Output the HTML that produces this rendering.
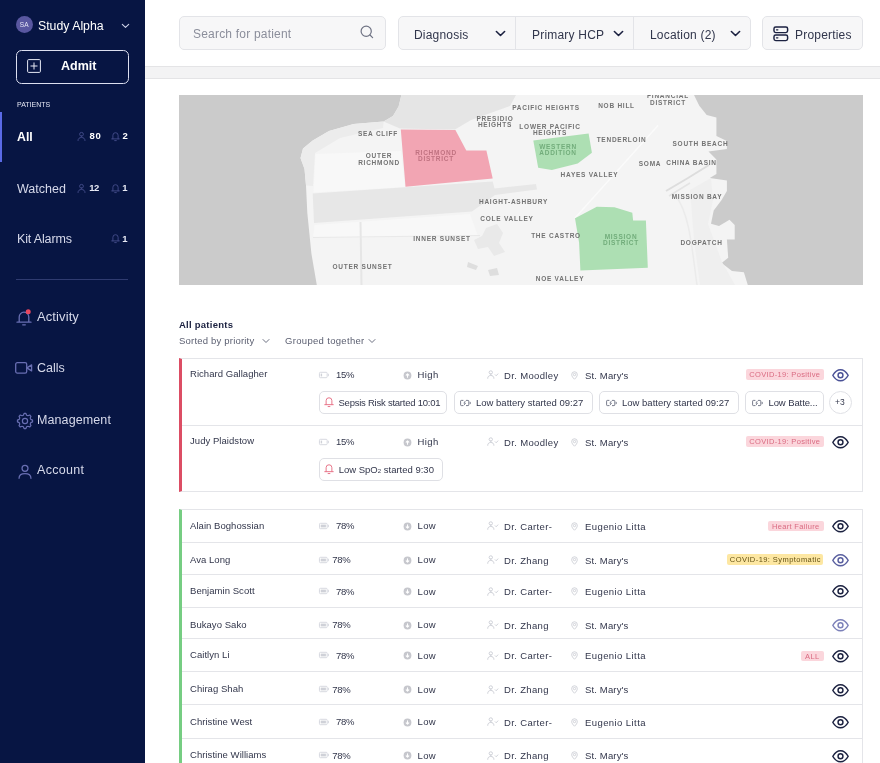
<!DOCTYPE html>
<html lang="en">
<head>
<meta charset="utf-8">
<title>Patients</title>
<style>
*{box-sizing:border-box;margin:0;padding:0}
html,body{width:880px;height:763px;overflow:hidden;background:#fff;font-family:"Liberation Sans",sans-serif;color:#1b2140}
.abs{position:absolute}
#side{position:absolute;left:0;top:0;width:145px;height:763px;background:#071543;color:#fff}
.t{position:absolute;white-space:nowrap;line-height:1}
svg{position:absolute;overflow:visible}
.box{position:absolute;background:#f7f7f8;border:1px solid #e3e4e8;border-radius:5px}
.r{font-size:9.5px;color:#32364b}
.chip{position:absolute;height:23px;border:1px solid #dfe0e5;border-radius:5px;background:#fff}
.tag{position:absolute;height:10.5px;border-radius:2px;font-size:7.5px;line-height:11.600px;text-align:center;white-space:nowrap;letter-spacing:.33px}
.ml{font-size:6.5px;font-weight:700;letter-spacing:.75px;fill:#737373;font-family:"Liberation Sans",sans-serif}
</style>
</head>
<body>
<div id="root" style="position:absolute;left:0;top:0;width:880px;height:763px;will-change:transform">
<div id="side">
<div class="abs" style="left:16px;top:16.400px;width:17px;height:17px;border-radius:50%;background:#5957a0"></div>
<div class="t" style="left:19.700px;top:21.700px;font-size:6.5px;color:#e6e6f5;letter-spacing:.2px">SA</div>
<div class="t" style="left:38px;top:19.600px;font-size:12.3px;color:#fff">Study Alpha</div>
<svg style="left:121px;top:23.400px" width="9" height="6" viewBox="0 0 9 6"><path d="M1.3 1.3 L4.5 4.3 L7.7 1.3" fill="none" stroke="#cfd3ea" stroke-width="1.1" stroke-linecap="round" stroke-linejoin="round"/></svg>
<div class="abs" style="left:16px;top:50px;width:113px;height:34px;border:1px solid #dcdff0;border-radius:5.5px"></div>
<svg style="left:27px;top:59px" width="14" height="14" viewBox="0 0 14 14"><rect x=".6" y=".6" width="12.8" height="12.8" rx="1" fill="none" stroke="#e8eaf5" stroke-width="1"/><path d="M7 3.500v7M3.5 7h7" stroke="#e8eaf5" stroke-width="1" fill="none"/></svg>
<div class="t" style="left:61px;top:60px;font-size:12.5px;font-weight:700;color:#fff">Admit</div>
<div class="t" style="left:17px;top:101px;font-size:7px;color:#e4e6f2">PATIENTS</div>
<div class="abs" style="left:0;top:112px;width:2px;height:50px;background:#5a6ae6"></div>
<div class="t" style="left:17px;top:130.5px;font-size:12.3px;font-weight:700;color:#fff">All</div>
<svg style="left:77px;top:131.5px" width="9" height="9" viewBox="0 0 9 9"><path d="M1 8.5c0-2 1.4-3 3.5-3s3.5 1 3.5 3M4.5 4.2a1.9 1.9 0 1 0 0-3.8 1.9 1.9 0 0 0 0 3.8z" fill="none" stroke="#454e8c" stroke-width=".9" stroke-linecap="round"/></svg>
<div class="t" style="left:89.600px;top:131.300px;font-size:9.5px;font-weight:700;letter-spacing:.5px;color:#fff">80</div>
<svg style="left:111px;top:131.5px" width="9" height="9" viewBox="0 0 9 9"><path d="M.7 6.900h7.600M1.9 6.900V3.300a2.6 2.6 0 0 1 5.2 0v3.600M3.7 8.600h1.6" fill="none" stroke="#454e8c" stroke-width=".9" stroke-linecap="round" stroke-linejoin="round"/></svg>
<div class="t" style="left:122.600px;top:131.300px;font-size:9.5px;font-weight:700;color:#fff">2</div>
<div class="t" style="left:17px;top:182.5px;font-size:12.5px;color:#d6d9ea">Watched</div>
<svg style="left:77px;top:183.5px" width="9" height="9" viewBox="0 0 9 9"><path d="M1 8.5c0-2 1.4-3 3.5-3s3.5 1 3.5 3M4.5 4.2a1.9 1.9 0 1 0 0-3.8 1.9 1.9 0 0 0 0 3.8z" fill="none" stroke="#454e8c" stroke-width=".9" stroke-linecap="round"/></svg>
<div class="t" style="left:89.300px;top:183.400px;font-size:9.5px;font-weight:700;letter-spacing:-.7px;color:#e8eaf5">12</div>
<svg style="left:111px;top:183.5px" width="9" height="9" viewBox="0 0 9 9"><path d="M.7 6.900h7.600M1.9 6.900V3.300a2.6 2.6 0 0 1 5.2 0v3.600M3.7 8.600h1.6" fill="none" stroke="#454e8c" stroke-width=".9" stroke-linecap="round" stroke-linejoin="round"/></svg>
<div class="t" style="left:122.300px;top:183.400px;font-size:9.5px;font-weight:700;color:#e8eaf5">1</div>
<div class="t" style="left:17px;top:233px;font-size:12.5px;letter-spacing:-.15px;color:#d6d9ea">Kit Alarms</div>
<svg style="left:111px;top:233.8px" width="9" height="9" viewBox="0 0 9 9"><path d="M.7 6.900h7.600M1.9 6.900V3.300a2.6 2.6 0 0 1 5.2 0v3.600M3.7 8.600h1.6" fill="none" stroke="#454e8c" stroke-width=".9" stroke-linecap="round" stroke-linejoin="round"/></svg>
<div class="t" style="left:122.300px;top:233.600px;font-size:9.5px;font-weight:700;color:#e8eaf5">1</div>
<div class="abs" style="left:16px;top:279px;width:112px;height:1px;background:#2f3b70"></div>
<svg style="left:16px;top:309px" width="17" height="17" viewBox="0 0 17 17"><path d="M1 13.2h14M3.2 13.200V8a4.8 4.8 0 0 1 9.6 0v5.200M6.7 15.800h2.6" fill="none" stroke="#686eb2" stroke-width="1.3" stroke-linecap="round" stroke-linejoin="round"/><circle cx="12.2" cy="2.7" r="2.5" fill="#e8475f"/></svg>
<div class="t" style="left:37px;top:310.300px;font-size:13px;letter-spacing:.1px;color:#d6d9ea">Activity</div>
<svg style="left:15px;top:361px" width="18" height="14" viewBox="0 0 18 14"><rect x=".7" y="1.7" width="11" height="10.4" rx="1.6" fill="none" stroke="#686eb2" stroke-width="1.3"/><path d="M11.9 6.900l4.7-3v6z" fill="none" stroke="#686eb2" stroke-width="1.3" stroke-linejoin="round"/></svg>
<div class="t" style="left:37px;top:362px;font-size:12.5px;color:#d6d9ea">Calls</div>
<svg style="left:15.5px;top:411.5px" width="18" height="18" viewBox="0 0 18 18"><path d="M16.55 8.09 L16.55 9.91 L14.78 10.62 L14.23 11.94 L14.98 13.69 L13.69 14.98 L11.94 14.23 L10.62 14.78 L9.91 16.55 L8.09 16.55 L7.38 14.78 L6.06 14.23 L4.31 14.98 L3.02 13.69 L3.77 11.94 L3.22 10.62 L1.45 9.91 L1.45 8.09 L3.22 7.38 L3.77 6.06 L3.02 4.31 L4.31 3.02 L6.06 3.77 L7.38 3.22 L8.09 1.45 L9.91 1.45 L10.62 3.22 L11.94 3.77 L13.69 3.02 L14.98 4.31 L14.23 6.06 L14.78 7.38Z" fill="none" stroke="#686eb2" stroke-width="1.2" stroke-linejoin="round"/><circle cx="9" cy="9" r="2.6" fill="none" stroke="#686eb2" stroke-width="1.2"/></svg>
<div class="t" style="left:37px;top:414px;font-size:12.5px;letter-spacing:.1px;color:#d6d9ea">Management</div>
<svg style="left:17.5px;top:463.5px" width="14" height="15.5" viewBox="0 0 16 17"><path d="M1.2 16c0-3.6 2.6-5.4 6.8-5.400s6.8 1.8 6.8 5.400M8 8a3.4 3.4 0 1 0 0-6.8 3.4 3.4 0 0 0 0 6.800z" fill="none" stroke="#686eb2" stroke-width="1.450" stroke-linecap="round"/></svg>
<div class="t" style="left:37px;top:464px;font-size:12.5px;letter-spacing:.3px;color:#d6d9ea">Account</div>
</div>
<div class="box" style="left:179px;top:16px;width:207px;height:34px"></div>
<div class="t" style="left:193px;top:27.5px;font-size:12px;letter-spacing:.2px;color:#8b8e9b">Search for patient</div>
<svg style="left:359.800px;top:25.300px" width="14" height="14" viewBox="0 0 14 14"><circle cx="6.2" cy="6.2" r="5.1" fill="none" stroke="#6f7384" stroke-width="1.2"/><path d="M10 10L12.6 12.6" stroke="#6f7384" stroke-width="1.2" stroke-linecap="round"/></svg>
<div class="box" style="left:398px;top:16px;width:353px;height:34px"></div>
<div class="abs" style="left:515px;top:16px;width:1px;height:34px;background:#e3e4e8"></div>
<div class="abs" style="left:633px;top:16px;width:1px;height:34px;background:#e3e4e8"></div>
<div class="t" style="left:414px;top:28.600px;font-size:12px;letter-spacing:.2px;color:#31364c">Diagnosis</div>
<svg style="left:494.5px;top:30px" width="11" height="7.5" viewBox="0 0 11 7.5"><path d="M1.4 1.5L5.5 5.5L9.6 1.5" fill="none" stroke="#1b2140" stroke-width="1.6" stroke-linecap="round" stroke-linejoin="round"/></svg>
<div class="t" style="left:532px;top:28.600px;font-size:12px;letter-spacing:.2px;color:#31364c">Primary HCP</div>
<svg style="left:612.5px;top:30px" width="11" height="7.5" viewBox="0 0 11 7.5"><path d="M1.4 1.5L5.5 5.5L9.6 1.5" fill="none" stroke="#1b2140" stroke-width="1.6" stroke-linecap="round" stroke-linejoin="round"/></svg>
<div class="t" style="left:650px;top:28.600px;font-size:12px;letter-spacing:.2px;color:#31364c">Location (2)</div>
<svg style="left:730.2px;top:30px" width="11" height="7.5" viewBox="0 0 11 7.5"><path d="M1.4 1.5L5.5 5.5L9.6 1.5" fill="none" stroke="#1b2140" stroke-width="1.6" stroke-linecap="round" stroke-linejoin="round"/></svg>
<div class="box" style="left:762px;top:16px;width:101px;height:34px"></div>
<svg style="left:772.700px;top:26px" width="15.6" height="15.6" viewBox="0 0 16 16"><rect x="1" y="1" width="14" height="5.8" rx="1.8" fill="none" stroke="#1b2140" stroke-width="1.5"/><rect x="1" y="9.2" width="14" height="5.8" rx="1.8" fill="none" stroke="#1b2140" stroke-width="1.5"/><path d="M3.6 3.900h1.4M3.6 12.1h1.4" stroke="#1b2140" stroke-width="1.3" stroke-linecap="round"/></svg>
<div class="t" style="left:795px;top:28.600px;font-size:12px;letter-spacing:.2px;color:#31364c">Properties</div>
<div class="abs" style="left:145px;top:66px;width:735px;height:13px;background:#f3f3f4;border-top:1px solid #e4e4e6;border-bottom:1px solid #e4e4e6"></div>
<svg style="left:179px;top:95px" width="684" height="190" viewBox="179 95 684 190">
<defs><clipPath id="mc"><rect x="179" y="95" width="684" height="190"/></clipPath></defs><g clip-path="url(#mc)">
<rect x="179" y="95" width="684" height="190" fill="#cbcbcb"/>
<path d="M401.4 95 L398.6 106.4 L393 116 L383.6 121.4 L353.6 124 L329 131 L312.7 140.5 L303 148.6 L300.5 158 L304.5 169 L306 185.5 L307.3 212.7 L311.4 253.6 L316.8 285 L747.8 285 L743.9 272.2 L732 271 L721.6 263 L728.2 257.8 L726.9 239.5 L734.7 239.5 L734.7 225 L729.5 219.8 L719 226 L711 223.7 L713.7 210.6 L721.6 200 L726.9 191 L726.9 180.5 L709.8 178 L716.4 174 L716.4 159.5 L708.5 151.6 L726.9 149 L726.9 141 L716.4 136 L716.4 117.5 L706.7 115 L699.3 105.7 L694 95 Z" fill="#f4f4f4"/>
<path d="M353.6 124 L329 131 L312.7 140.5 L303 148.6 L300.5 158 L304.5 169 L306 185.5 L313 186 L315 153 L340 138 L383 128 L383.6 121.4 Z" fill="#ececec"/>
<path d="M401.4 95 L398.6 106.4 L393 116 L383.6 121.4 L400 128.5 L455 129.5 L471 120 L510 106 L516 95 Z" fill="#e5e5e5"/>
<path d="M315.5 154 L401 151 L405 187 L313.5 192.5 Z" fill="#f8f8f8"/>
<path d="M312.7 193.5 L405.5 187.3 L492.7 181.4 L494.5 188.5 L536 184 L537 189.5 L495 195 L472 211.5 L314 223 Z" fill="#e7e7e7"/>
<path d="M314.5 225 L470 214 L478 236 L313 238 Z" fill="#f8f8f8"/>
<path d="M359.5 222 L361.5 222 L362.5 285 L360.5 285 Z" fill="#e6e6e6"/>
<path d="M313 237.5 L480 235.5" stroke="#e9e9e9" stroke-width="1" fill="none"/>
<path d="M486 228 L497 224 L503 233 L499 243 L505 252 L494 256 L488 247 L478 249 L474 240 L482 236 Z" fill="#e9e9e9"/>
<path d="M468 262 L478 266 L476 270 L467 267 Z" fill="#dedede"/>
<path d="M488 270 L497 268 L499 275 L490 276 Z" fill="#dedede"/>
<path d="M690 190 L711 178 L713 200 L708 224 L722 262 L735 285 L700 285 L694 240 Z" fill="#efefef"/>
<path d="M575 218 L658 125.5" stroke="#fbfbfb" stroke-width="1.5" fill="none"/>
<path d="M666 191 L688 178 L709 165" stroke="#dddddd" stroke-width="2" fill="none"/>
<path d="M669 196 L690 183" stroke="#e4e4e4" stroke-width="1.5" fill="none"/>
<path d="M676 196 C690 215 692 250 697 285" stroke="#ebebeb" stroke-width="1.5" fill="none"/>
<path d="M400.8 129.5 L455.4 130 L466.3 150.5 L486.4 150.5 L492.7 178.6 L405.5 186.8 Z" fill="#f2a5b3"/>
<path d="M533.3 140.5 L588.6 133.6 L591.9 152.7 L577.7 163.6 L551.8 169.9 L538.2 167.7 Z" fill="#addfb3"/>
<path d="M575 218.2 L596.8 206.7 L614.5 207.3 L632.3 212.7 L633.1 220.4 L645.9 220.4 L647.8 267.8 L580.4 270.5 L579.1 242.7 Z" fill="#addfb3"/>
<text class="ml" x="378" y="136" text-anchor="middle">SEA CLIFF</text>
<text class="ml" x="379" y="158" text-anchor="middle">OUTER</text>
<text class="ml" x="379" y="164.5" text-anchor="middle">RICHMOND</text>
<text class="ml" x="436" y="154.5" text-anchor="middle" style="fill:#c07281">RICHMOND</text>
<text class="ml" x="436" y="161" text-anchor="middle" style="fill:#c07281">DISTRICT</text>
<text class="ml" x="495" y="120.5" text-anchor="middle">PRESIDIO</text>
<text class="ml" x="495" y="127" text-anchor="middle">HEIGHTS</text>
<text class="ml" x="546" y="109.5" text-anchor="middle">PACIFIC HEIGHTS</text>
<text class="ml" x="550" y="128.5" text-anchor="middle">LOWER PACIFIC</text>
<text class="ml" x="550" y="135" text-anchor="middle">HEIGHTS</text>
<text class="ml" x="616.5" y="107.5" text-anchor="middle">NOB HILL</text>
<text class="ml" x="668" y="98" text-anchor="middle">FINANCIAL</text>
<text class="ml" x="668" y="104.5" text-anchor="middle">DISTRICT</text>
<text class="ml" x="558" y="148.5" text-anchor="middle" style="fill:#72ad7b">WESTERN</text>
<text class="ml" x="558" y="155" text-anchor="middle" style="fill:#72ad7b">ADDITION</text>
<text class="ml" x="621.5" y="141.5" text-anchor="middle">TENDERLOIN</text>
<text class="ml" x="700.5" y="146" text-anchor="middle">SOUTH BEACH</text>
<text class="ml" x="650" y="165.5" text-anchor="middle">SOMA</text>
<text class="ml" x="691.5" y="164.5" text-anchor="middle">CHINA BASIN</text>
<text class="ml" x="589.5" y="177" text-anchor="middle">HAYES VALLEY</text>
<text class="ml" x="697" y="198.5" text-anchor="middle">MISSION BAY</text>
<text class="ml" x="513.5" y="203.5" text-anchor="middle">HAIGHT-ASHBURY</text>
<text class="ml" x="507" y="221" text-anchor="middle">COLE VALLEY</text>
<text class="ml" x="442" y="241" text-anchor="middle">INNER SUNSET</text>
<text class="ml" x="556" y="238" text-anchor="middle">THE CASTRO</text>
<text class="ml" x="621" y="238.5" text-anchor="middle" style="fill:#72ad7b">MISSION</text>
<text class="ml" x="621" y="245" text-anchor="middle" style="fill:#72ad7b">DISTRICT</text>
<text class="ml" x="701.5" y="245" text-anchor="middle">DOGPATCH</text>
<text class="ml" x="362.5" y="268.5" text-anchor="middle">OUTER SUNSET</text>
<text class="ml" x="560" y="281" text-anchor="middle">NOE VALLEY</text>
</g></svg>
<div class="t" style="left:179px;top:320px;font-size:9.5px;letter-spacing:.25px;font-weight:700;color:#1b2140">All patients</div>
<div class="t" style="left:179px;top:336px;font-size:9.5px;letter-spacing:.2px;color:#5a5e70">Sorted by priority</div>
<svg style="left:261.5px;top:338px" width="8" height="6" viewBox="0 0 8 6"><path d="M1 1.500L4 4.500L7 1.5" fill="none" stroke="#6b6f80" stroke-width="1" stroke-linecap="round" stroke-linejoin="round"/></svg>
<div class="t" style="left:285px;top:336px;font-size:9.5px;letter-spacing:.32px;color:#5a5e70">Grouped together</div>
<svg style="left:368px;top:338px" width="8" height="6" viewBox="0 0 8 6"><path d="M1 1.500L4 4.500L7 1.5" fill="none" stroke="#6b6f80" stroke-width="1" stroke-linecap="round" stroke-linejoin="round"/></svg>
<div class="abs" style="left:179px;top:358px;width:684px;height:134px;border:1px solid #e4e5e9;border-left:3px solid #dc4d64;background:#fff"></div>
<div class="abs" style="left:182px;top:425px;width:680px;height:1px;background:#e4e5e9"></div>
<div class="t r" style="left:190px;top:368.9px;letter-spacing:.05px">Richard Gallagher</div>
<svg style="left:319px;top:370.9px" width="11" height="8" viewBox="0 0 11 8"><rect x=".45" y="1.3" width="7.7" height="5.4" rx="1" fill="none" stroke="#d3d5dc" stroke-width=".9"/><path d="M9.4 3.200v1.6" stroke="#d3d5dc" stroke-width=".9" stroke-linecap="round"/><rect x="1.7" y="2.6" width="1.4" height="2.8" fill="#cfd1d8"/></svg>
<div class="t r" style="left:335.9px;top:370.4px;letter-spacing:-.25px">15%</div>
<svg style="left:402.8px;top:370.7px" width="9" height="9" viewBox="0 0 9 9"><circle cx="4.5" cy="4.5" r="3.9" fill="#c6c7cd"/><path d="M4.5 6.200V3M3.2 4.200L4.5 2.900L5.8 4.2" stroke="#fff" stroke-width="1.1" fill="none" stroke-linecap="round" stroke-linejoin="round"/></svg>
<div class="t r" style="left:417.5px;top:370.4px;letter-spacing:.4px">High</div>
<svg style="left:486.5px;top:370.3px" width="11.5" height="9" viewBox="0 0 13 10"><path d="M.800 9.300c0-2.1 1.4-3.2 3.5-3.200s3.5 1.1 3.5 3.200M4.3 4.600a1.9 1.9 0 1 0 0-3.8 1.9 1.9 0 0 0 0 3.800zM9.3 5.300l1.1 1.1 1.9-2.1" fill="none" stroke="#c9cbd3" stroke-width="1" stroke-linecap="round" stroke-linejoin="round"/></svg>
<div class="t r" style="left:504px;top:370.7px;letter-spacing:.35px">Dr. Moodley</div>
<svg style="left:570.5px;top:370.5px" width="7" height="9" viewBox="0 0 9 11"><path d="M4.5 10.300C2.3 8.2.9 6.3.9 4.300a3.6 3.6 0 0 1 7.2 0c0 2-1.4 3.9-3.6 6z" fill="none" stroke="#c9cbd3" stroke-width="1.1"/><circle cx="4.5" cy="4.3" r="1.5" fill="none" stroke="#c9cbd3" stroke-width="1.1"/></svg>
<div class="t r" style="left:585px;top:370.7px;letter-spacing:0.15px">St. Mary&#39;s</div>
<div class="tag" style="left:745.5px;top:369px;width:78.5px;background:#fbd6dc;color:#da6b82">COVID-19: Positive</div>
<svg style="left:832.3px;top:368.6px" width="17" height="12.6" viewBox="0 0 17 12.6"><path d="M.8 6.300C2.9 2.8 5.4 .8 8.5 .8s5.6 2 7.7 5.500c-2.1 3.5-4.6 5.5-7.7 5.500S2.9 9.8 .8 6.300z" fill="none" stroke="#4a5196" stroke-width="1.350" stroke-linejoin="round"/><circle cx="8.5" cy="6.3" r="2.450" fill="none" stroke="#4a5196" stroke-width="1.450"/></svg>
<div class="t r" style="left:190px;top:436.1px;letter-spacing:.05px">Judy Plaidstow</div>
<svg style="left:319px;top:437.9px" width="11" height="8" viewBox="0 0 11 8"><rect x=".45" y="1.3" width="7.7" height="5.4" rx="1" fill="none" stroke="#d3d5dc" stroke-width=".9"/><path d="M9.4 3.200v1.6" stroke="#d3d5dc" stroke-width=".9" stroke-linecap="round"/><rect x="1.7" y="2.6" width="1.4" height="2.8" fill="#cfd1d8"/></svg>
<div class="t r" style="left:335.9px;top:437.4px;letter-spacing:-.25px">15%</div>
<svg style="left:402.8px;top:437.7px" width="9" height="9" viewBox="0 0 9 9"><circle cx="4.5" cy="4.5" r="3.9" fill="#c6c7cd"/><path d="M4.5 6.200V3M3.2 4.200L4.5 2.900L5.8 4.2" stroke="#fff" stroke-width="1.1" fill="none" stroke-linecap="round" stroke-linejoin="round"/></svg>
<div class="t r" style="left:417.5px;top:437.4px;letter-spacing:.4px">High</div>
<svg style="left:486.5px;top:437.3px" width="11.5" height="9" viewBox="0 0 13 10"><path d="M.800 9.300c0-2.1 1.4-3.2 3.5-3.200s3.5 1.1 3.5 3.200M4.3 4.600a1.9 1.9 0 1 0 0-3.8 1.9 1.9 0 0 0 0 3.800zM9.3 5.300l1.1 1.1 1.9-2.1" fill="none" stroke="#c9cbd3" stroke-width="1" stroke-linecap="round" stroke-linejoin="round"/></svg>
<div class="t r" style="left:504px;top:437.7px;letter-spacing:.35px">Dr. Moodley</div>
<svg style="left:570.5px;top:437.5px" width="7" height="9" viewBox="0 0 9 11"><path d="M4.5 10.300C2.3 8.2.9 6.3.9 4.300a3.6 3.6 0 0 1 7.2 0c0 2-1.4 3.9-3.6 6z" fill="none" stroke="#c9cbd3" stroke-width="1.1"/><circle cx="4.5" cy="4.3" r="1.5" fill="none" stroke="#c9cbd3" stroke-width="1.1"/></svg>
<div class="t r" style="left:585px;top:437.7px;letter-spacing:0.15px">St. Mary&#39;s</div>
<div class="tag" style="left:745.5px;top:436px;width:78.5px;background:#fbd6dc;color:#da6b82">COVID-19: Positive</div>
<svg style="left:832.3px;top:436.2px" width="17" height="12.6" viewBox="0 0 17 12.6"><path d="M.8 6.300C2.9 2.8 5.4 .8 8.5 .8s5.6 2 7.7 5.500c-2.1 3.5-4.6 5.5-7.7 5.500S2.9 9.8 .8 6.300z" fill="none" stroke="#1b2140" stroke-width="1.350" stroke-linejoin="round"/><circle cx="8.5" cy="6.3" r="2.450" fill="none" stroke="#1b2140" stroke-width="1.450"/></svg>
<div class="chip" style="left:319px;top:391px;width:128px"></div>
<svg style="left:324.3px;top:397.1px" width="10" height="10" viewBox="0 0 9 9"><path d="M.7 6.900h7.600M1.9 6.900V3.300a2.6 2.6 0 0 1 5.2 0v3.600M3.7 8.600h1.6" fill="none" stroke="#e8768a" stroke-width=".9" stroke-linecap="round" stroke-linejoin="round"/></svg>
<div class="t r" style="left:338.5px;top:397.5px;letter-spacing:-.24px">Sepsis Risk started 10:01</div>
<div class="chip" style="left:454px;top:391px;width:139px"></div>
<svg style="left:460px;top:398.5px" width="11" height="8" viewBox="0 0 11 8"><path d="M3 1.400H1.300a.7.7 0 0 0-.7.700v3.800a.7.7 0 0 0 .7.700H3M6.4 1.400h1.700a.7.7 0 0 1 .7.700v3.800a.7.7 0 0 1-.7.700H6.400M10.2 3.300v1.4" fill="none" stroke="#6a6e80" stroke-width=".9" stroke-linecap="round"/><path d="M5.2 2.200L3.9 4.200h1.600L4.2 5.9" fill="none" stroke="#6a6e80" stroke-width=".8" stroke-linejoin="round" stroke-linecap="round"/></svg>
<div class="t r" style="left:476px;top:397.5px;">Low battery started 09:27</div>
<div class="chip" style="left:599px;top:391px;width:140px"></div>
<svg style="left:606px;top:398.5px" width="11" height="8" viewBox="0 0 11 8"><path d="M3 1.400H1.300a.7.7 0 0 0-.7.700v3.800a.7.7 0 0 0 .7.700H3M6.4 1.400h1.700a.7.7 0 0 1 .7.700v3.800a.7.7 0 0 1-.7.700H6.400M10.2 3.300v1.4" fill="none" stroke="#6a6e80" stroke-width=".9" stroke-linecap="round"/><path d="M5.2 2.200L3.9 4.200h1.600L4.2 5.9" fill="none" stroke="#6a6e80" stroke-width=".8" stroke-linejoin="round" stroke-linecap="round"/></svg>
<div class="t r" style="left:622px;top:397.5px;">Low battery started 09:27</div>
<div class="chip" style="left:745px;top:391px;width:79px"></div>
<svg style="left:752px;top:398.5px" width="11" height="8" viewBox="0 0 11 8"><path d="M3 1.400H1.300a.7.7 0 0 0-.7.700v3.800a.7.7 0 0 0 .7.700H3M6.4 1.400h1.700a.7.7 0 0 1 .7.700v3.800a.7.7 0 0 1-.7.700H6.400M10.2 3.300v1.4" fill="none" stroke="#6a6e80" stroke-width=".9" stroke-linecap="round"/><path d="M5.2 2.200L3.9 4.200h1.600L4.2 5.9" fill="none" stroke="#6a6e80" stroke-width=".8" stroke-linejoin="round" stroke-linecap="round"/></svg>
<div class="t r" style="left:768.5px;top:397.5px;letter-spacing:-.1px">Low Batte...</div>
<div class="abs" style="left:829px;top:391px;width:23px;height:23px;border:1px solid #dfe0e5;border-radius:50%"></div>
<div class="t r" style="left:835px;top:397.5px;font-size:8.500px">+3</div>
<div class="chip" style="left:319px;top:458px;width:124px"></div>
<svg style="left:324.3px;top:464.1px" width="10" height="10" viewBox="0 0 9 9"><path d="M.7 6.900h7.600M1.9 6.900V3.300a2.6 2.6 0 0 1 5.2 0v3.600M3.7 8.600h1.6" fill="none" stroke="#e8768a" stroke-width=".9" stroke-linecap="round" stroke-linejoin="round"/></svg>
<div class="t r" style="left:338.7px;top:464.7px;">Low SpO<span style="font-size:6px">2</span> started 9:30</div>
<div class="abs" style="left:179px;top:509px;width:684px;height:261px;border:1px solid #e4e5e9;border-left:3px solid #76cd82;background:#fff"></div>
<div class="abs" style="left:182px;top:542px;width:680px;height:1px;background:#e4e5e9"></div>
<div class="abs" style="left:182px;top:574px;width:680px;height:1px;background:#e4e5e9"></div>
<div class="abs" style="left:182px;top:607px;width:680px;height:1px;background:#e4e5e9"></div>
<div class="abs" style="left:182px;top:638px;width:680px;height:1px;background:#e4e5e9"></div>
<div class="abs" style="left:182px;top:671px;width:680px;height:1px;background:#e4e5e9"></div>
<div class="abs" style="left:182px;top:704px;width:680px;height:1px;background:#e4e5e9"></div>
<div class="abs" style="left:182px;top:737.5px;width:680px;height:1px;background:#e4e5e9"></div>
<div class="t r" style="left:190px;top:520.5px;letter-spacing:.05px">Alain Boghossian</div>
<svg style="left:319px;top:521.9px" width="11" height="8" viewBox="0 0 11 8"><rect x=".45" y="1.3" width="7.7" height="5.4" rx="1" fill="none" stroke="#d3d5dc" stroke-width=".9"/><path d="M9.4 3.200v1.6" stroke="#d3d5dc" stroke-width=".9" stroke-linecap="round"/><rect x="1.7" y="2.6" width="5.2" height="2.8" fill="#cfd1d8"/></svg>
<div class="t r" style="left:335.9px;top:521.4px;letter-spacing:-.25px">78%</div>
<svg style="left:402.8px;top:521.7px" width="9" height="9" viewBox="0 0 9 9"><circle cx="4.5" cy="4.5" r="3.9" fill="#c6c7cd"/><path d="M4.5 2.800V6M3.2 4.800L4.5 6.100L5.8 4.8" stroke="#fff" stroke-width="1.1" fill="none" stroke-linecap="round" stroke-linejoin="round"/></svg>
<div class="t r" style="left:417.5px;top:521.4px;letter-spacing:.4px">Low</div>
<svg style="left:486.5px;top:521.3px" width="11.5" height="9" viewBox="0 0 13 10"><path d="M.800 9.300c0-2.1 1.4-3.2 3.5-3.200s3.5 1.1 3.5 3.200M4.3 4.600a1.9 1.9 0 1 0 0-3.8 1.9 1.9 0 0 0 0 3.800zM9.3 5.300l1.1 1.1 1.9-2.1" fill="none" stroke="#c9cbd3" stroke-width="1" stroke-linecap="round" stroke-linejoin="round"/></svg>
<div class="t r" style="left:504px;top:521.7px;letter-spacing:.35px">Dr. Carter-</div>
<svg style="left:570.5px;top:521.5px" width="7" height="9" viewBox="0 0 9 11"><path d="M4.5 10.300C2.3 8.2.9 6.3.9 4.300a3.6 3.6 0 0 1 7.2 0c0 2-1.4 3.9-3.6 6z" fill="none" stroke="#c9cbd3" stroke-width="1.1"/><circle cx="4.5" cy="4.3" r="1.5" fill="none" stroke="#c9cbd3" stroke-width="1.1"/></svg>
<div class="t r" style="left:585px;top:521.7px;letter-spacing:0.42px">Eugenio Litta</div>
<div class="tag" style="left:768px;top:520.5px;width:55.5px;background:#fbd6dc;color:#da6b82">Heart Failure</div>
<svg style="left:832.3px;top:520.2px" width="17" height="12.6" viewBox="0 0 17 12.6"><path d="M.8 6.300C2.9 2.8 5.4 .8 8.5 .8s5.6 2 7.7 5.500c-2.1 3.5-4.6 5.5-7.7 5.500S2.9 9.8 .8 6.300z" fill="none" stroke="#1b2140" stroke-width="1.350" stroke-linejoin="round"/><circle cx="8.5" cy="6.3" r="2.450" fill="none" stroke="#1b2140" stroke-width="1.450"/></svg>
<div class="t r" style="left:190px;top:554.5px;letter-spacing:.05px">Ava Long</div>
<svg style="left:319px;top:555.9px" width="11" height="8" viewBox="0 0 11 8"><rect x=".45" y="1.3" width="7.7" height="5.4" rx="1" fill="none" stroke="#d3d5dc" stroke-width=".9"/><path d="M9.4 3.200v1.6" stroke="#d3d5dc" stroke-width=".9" stroke-linecap="round"/><rect x="1.7" y="2.6" width="5.2" height="2.8" fill="#cfd1d8"/></svg>
<div class="t r" style="left:332.3px;top:555.4px;letter-spacing:-.25px">78%</div>
<svg style="left:402.8px;top:555.7px" width="9" height="9" viewBox="0 0 9 9"><circle cx="4.5" cy="4.5" r="3.9" fill="#c6c7cd"/><path d="M4.5 2.800V6M3.2 4.800L4.5 6.100L5.8 4.8" stroke="#fff" stroke-width="1.1" fill="none" stroke-linecap="round" stroke-linejoin="round"/></svg>
<div class="t r" style="left:417.5px;top:555.4px;letter-spacing:.4px">Low</div>
<svg style="left:486.5px;top:555.3px" width="11.5" height="9" viewBox="0 0 13 10"><path d="M.800 9.300c0-2.1 1.4-3.2 3.5-3.200s3.5 1.1 3.5 3.200M4.3 4.600a1.9 1.9 0 1 0 0-3.8 1.9 1.9 0 0 0 0 3.800zM9.3 5.300l1.1 1.1 1.9-2.1" fill="none" stroke="#c9cbd3" stroke-width="1" stroke-linecap="round" stroke-linejoin="round"/></svg>
<div class="t r" style="left:504px;top:555.7px;letter-spacing:.35px">Dr. Zhang</div>
<svg style="left:570.5px;top:555.5px" width="7" height="9" viewBox="0 0 9 11"><path d="M4.5 10.300C2.3 8.2.9 6.3.9 4.300a3.6 3.6 0 0 1 7.2 0c0 2-1.4 3.9-3.6 6z" fill="none" stroke="#c9cbd3" stroke-width="1.1"/><circle cx="4.5" cy="4.3" r="1.5" fill="none" stroke="#c9cbd3" stroke-width="1.1"/></svg>
<div class="t r" style="left:585px;top:555.7px;letter-spacing:0.15px">St. Mary&#39;s</div>
<div class="tag" style="left:727.3px;top:554.2px;width:96.2px;background:#fde7a2;color:#655316;height:11px;line-height:12.200px;letter-spacing:.43px">COVID-19: Symptomatic</div>
<svg style="left:832.3px;top:553.6px" width="17" height="12.6" viewBox="0 0 17 12.6"><path d="M.8 6.300C2.9 2.8 5.4 .8 8.5 .8s5.6 2 7.7 5.500c-2.1 3.5-4.6 5.5-7.7 5.500S2.9 9.8 .8 6.300z" fill="none" stroke="#595f9f" stroke-width="1.350" stroke-linejoin="round"/><circle cx="8.5" cy="6.3" r="2.450" fill="none" stroke="#595f9f" stroke-width="1.450"/></svg>
<div class="t r" style="left:190px;top:586px;letter-spacing:.05px">Benjamin Scott</div>
<svg style="left:319px;top:587.4px" width="11" height="8" viewBox="0 0 11 8"><rect x=".45" y="1.3" width="7.7" height="5.4" rx="1" fill="none" stroke="#d3d5dc" stroke-width=".9"/><path d="M9.4 3.200v1.6" stroke="#d3d5dc" stroke-width=".9" stroke-linecap="round"/><rect x="1.7" y="2.6" width="5.2" height="2.8" fill="#cfd1d8"/></svg>
<div class="t r" style="left:335.9px;top:586.9px;letter-spacing:-.25px">78%</div>
<svg style="left:402.8px;top:587.2px" width="9" height="9" viewBox="0 0 9 9"><circle cx="4.5" cy="4.5" r="3.9" fill="#c6c7cd"/><path d="M4.5 2.800V6M3.2 4.800L4.5 6.100L5.8 4.8" stroke="#fff" stroke-width="1.1" fill="none" stroke-linecap="round" stroke-linejoin="round"/></svg>
<div class="t r" style="left:417.5px;top:586.9px;letter-spacing:.4px">Low</div>
<svg style="left:486.5px;top:586.8px" width="11.5" height="9" viewBox="0 0 13 10"><path d="M.800 9.300c0-2.1 1.4-3.2 3.5-3.200s3.5 1.1 3.5 3.200M4.3 4.600a1.9 1.9 0 1 0 0-3.8 1.9 1.9 0 0 0 0 3.800zM9.3 5.300l1.1 1.1 1.9-2.1" fill="none" stroke="#c9cbd3" stroke-width="1" stroke-linecap="round" stroke-linejoin="round"/></svg>
<div class="t r" style="left:504px;top:587.2px;letter-spacing:.35px">Dr. Carter-</div>
<svg style="left:570.5px;top:587px" width="7" height="9" viewBox="0 0 9 11"><path d="M4.5 10.300C2.3 8.2.9 6.3.9 4.300a3.6 3.6 0 0 1 7.2 0c0 2-1.4 3.9-3.6 6z" fill="none" stroke="#c9cbd3" stroke-width="1.1"/><circle cx="4.5" cy="4.3" r="1.5" fill="none" stroke="#c9cbd3" stroke-width="1.1"/></svg>
<div class="t r" style="left:585px;top:587.2px;letter-spacing:0.42px">Eugenio Litta</div>
<svg style="left:832.3px;top:584.6px" width="17" height="12.6" viewBox="0 0 17 12.6"><path d="M.8 6.300C2.9 2.8 5.4 .8 8.5 .8s5.6 2 7.7 5.500c-2.1 3.5-4.6 5.5-7.7 5.500S2.9 9.8 .8 6.300z" fill="none" stroke="#1b2140" stroke-width="1.350" stroke-linejoin="round"/><circle cx="8.5" cy="6.3" r="2.450" fill="none" stroke="#1b2140" stroke-width="1.450"/></svg>
<div class="t r" style="left:190px;top:619.5px;letter-spacing:.05px">Bukayo Sako</div>
<svg style="left:319px;top:620.9px" width="11" height="8" viewBox="0 0 11 8"><rect x=".45" y="1.3" width="7.7" height="5.4" rx="1" fill="none" stroke="#d3d5dc" stroke-width=".9"/><path d="M9.4 3.200v1.6" stroke="#d3d5dc" stroke-width=".9" stroke-linecap="round"/><rect x="1.7" y="2.6" width="5.2" height="2.8" fill="#cfd1d8"/></svg>
<div class="t r" style="left:332.3px;top:620.4px;letter-spacing:-.25px">78%</div>
<svg style="left:402.8px;top:620.7px" width="9" height="9" viewBox="0 0 9 9"><circle cx="4.5" cy="4.5" r="3.9" fill="#c6c7cd"/><path d="M4.5 2.800V6M3.2 4.800L4.5 6.100L5.8 4.8" stroke="#fff" stroke-width="1.1" fill="none" stroke-linecap="round" stroke-linejoin="round"/></svg>
<div class="t r" style="left:417.5px;top:620.4px;letter-spacing:.4px">Low</div>
<svg style="left:486.5px;top:620.3px" width="11.5" height="9" viewBox="0 0 13 10"><path d="M.800 9.300c0-2.1 1.4-3.2 3.5-3.200s3.5 1.1 3.5 3.200M4.3 4.600a1.9 1.9 0 1 0 0-3.8 1.9 1.9 0 0 0 0 3.800zM9.3 5.300l1.1 1.1 1.9-2.1" fill="none" stroke="#c9cbd3" stroke-width="1" stroke-linecap="round" stroke-linejoin="round"/></svg>
<div class="t r" style="left:504px;top:620.7px;letter-spacing:.35px">Dr. Zhang</div>
<svg style="left:570.5px;top:620.5px" width="7" height="9" viewBox="0 0 9 11"><path d="M4.5 10.300C2.3 8.2.9 6.3.9 4.300a3.6 3.6 0 0 1 7.2 0c0 2-1.4 3.9-3.6 6z" fill="none" stroke="#c9cbd3" stroke-width="1.1"/><circle cx="4.5" cy="4.3" r="1.5" fill="none" stroke="#c9cbd3" stroke-width="1.1"/></svg>
<div class="t r" style="left:585px;top:620.7px;letter-spacing:0.15px">St. Mary&#39;s</div>
<svg style="left:832.3px;top:618.5px" width="17" height="12.6" viewBox="0 0 17 12.6"><path d="M.8 6.300C2.9 2.8 5.4 .8 8.5 .8s5.6 2 7.7 5.500c-2.1 3.5-4.6 5.5-7.7 5.500S2.9 9.8 .8 6.300z" fill="none" stroke="#7c81b9" stroke-width="1.350" stroke-linejoin="round"/><circle cx="8.5" cy="6.3" r="2.450" fill="none" stroke="#7c81b9" stroke-width="1.450"/></svg>
<div class="t r" style="left:190px;top:650px;letter-spacing:.05px">Caitlyn Li</div>
<svg style="left:319px;top:651.4px" width="11" height="8" viewBox="0 0 11 8"><rect x=".45" y="1.3" width="7.7" height="5.4" rx="1" fill="none" stroke="#d3d5dc" stroke-width=".9"/><path d="M9.4 3.200v1.6" stroke="#d3d5dc" stroke-width=".9" stroke-linecap="round"/><rect x="1.7" y="2.6" width="5.2" height="2.8" fill="#cfd1d8"/></svg>
<div class="t r" style="left:335.9px;top:650.9px;letter-spacing:-.25px">78%</div>
<svg style="left:402.8px;top:651.2px" width="9" height="9" viewBox="0 0 9 9"><circle cx="4.5" cy="4.5" r="3.9" fill="#c6c7cd"/><path d="M4.5 2.800V6M3.2 4.800L4.5 6.100L5.8 4.8" stroke="#fff" stroke-width="1.1" fill="none" stroke-linecap="round" stroke-linejoin="round"/></svg>
<div class="t r" style="left:417.5px;top:650.9px;letter-spacing:.4px">Low</div>
<svg style="left:486.5px;top:650.8px" width="11.5" height="9" viewBox="0 0 13 10"><path d="M.800 9.300c0-2.1 1.4-3.2 3.5-3.200s3.5 1.1 3.5 3.200M4.3 4.600a1.9 1.9 0 1 0 0-3.8 1.9 1.9 0 0 0 0 3.800zM9.3 5.300l1.1 1.1 1.9-2.1" fill="none" stroke="#c9cbd3" stroke-width="1" stroke-linecap="round" stroke-linejoin="round"/></svg>
<div class="t r" style="left:504px;top:651.2px;letter-spacing:.35px">Dr. Carter-</div>
<svg style="left:570.5px;top:651px" width="7" height="9" viewBox="0 0 9 11"><path d="M4.5 10.300C2.3 8.2.9 6.3.9 4.300a3.6 3.6 0 0 1 7.2 0c0 2-1.4 3.9-3.6 6z" fill="none" stroke="#c9cbd3" stroke-width="1.1"/><circle cx="4.5" cy="4.3" r="1.5" fill="none" stroke="#c9cbd3" stroke-width="1.1"/></svg>
<div class="t r" style="left:585px;top:651.2px;letter-spacing:0.42px">Eugenio Litta</div>
<div class="tag" style="left:801px;top:650.5px;width:22.5px;background:#fbd6dc;color:#da6b82">ALL</div>
<svg style="left:832.3px;top:649.7px" width="17" height="12.6" viewBox="0 0 17 12.6"><path d="M.8 6.300C2.9 2.8 5.4 .8 8.5 .8s5.6 2 7.7 5.500c-2.1 3.5-4.6 5.5-7.7 5.500S2.9 9.8 .8 6.300z" fill="none" stroke="#1b2140" stroke-width="1.350" stroke-linejoin="round"/><circle cx="8.5" cy="6.3" r="2.450" fill="none" stroke="#1b2140" stroke-width="1.450"/></svg>
<div class="t r" style="left:190px;top:684px;letter-spacing:.05px">Chirag Shah</div>
<svg style="left:319px;top:685.4px" width="11" height="8" viewBox="0 0 11 8"><rect x=".45" y="1.3" width="7.7" height="5.4" rx="1" fill="none" stroke="#d3d5dc" stroke-width=".9"/><path d="M9.4 3.200v1.6" stroke="#d3d5dc" stroke-width=".9" stroke-linecap="round"/><rect x="1.7" y="2.6" width="5.2" height="2.8" fill="#cfd1d8"/></svg>
<div class="t r" style="left:332.3px;top:684.9px;letter-spacing:-.25px">78%</div>
<svg style="left:402.8px;top:685.2px" width="9" height="9" viewBox="0 0 9 9"><circle cx="4.5" cy="4.5" r="3.9" fill="#c6c7cd"/><path d="M4.5 2.800V6M3.2 4.800L4.5 6.100L5.8 4.8" stroke="#fff" stroke-width="1.1" fill="none" stroke-linecap="round" stroke-linejoin="round"/></svg>
<div class="t r" style="left:417.5px;top:684.9px;letter-spacing:.4px">Low</div>
<svg style="left:486.5px;top:684.8px" width="11.5" height="9" viewBox="0 0 13 10"><path d="M.800 9.300c0-2.1 1.4-3.2 3.5-3.200s3.5 1.1 3.5 3.200M4.3 4.600a1.9 1.9 0 1 0 0-3.8 1.9 1.9 0 0 0 0 3.800zM9.3 5.300l1.1 1.1 1.9-2.1" fill="none" stroke="#c9cbd3" stroke-width="1" stroke-linecap="round" stroke-linejoin="round"/></svg>
<div class="t r" style="left:504px;top:685.2px;letter-spacing:.35px">Dr. Zhang</div>
<svg style="left:570.5px;top:685px" width="7" height="9" viewBox="0 0 9 11"><path d="M4.5 10.300C2.3 8.2.9 6.3.9 4.300a3.6 3.6 0 0 1 7.2 0c0 2-1.4 3.9-3.6 6z" fill="none" stroke="#c9cbd3" stroke-width="1.1"/><circle cx="4.5" cy="4.3" r="1.5" fill="none" stroke="#c9cbd3" stroke-width="1.1"/></svg>
<div class="t r" style="left:585px;top:685.2px;letter-spacing:0.15px">St. Mary&#39;s</div>
<svg style="left:832.3px;top:683.7px" width="17" height="12.6" viewBox="0 0 17 12.6"><path d="M.8 6.300C2.9 2.8 5.4 .8 8.5 .8s5.6 2 7.7 5.500c-2.1 3.5-4.6 5.5-7.7 5.500S2.9 9.8 .8 6.300z" fill="none" stroke="#1b2140" stroke-width="1.350" stroke-linejoin="round"/><circle cx="8.5" cy="6.3" r="2.450" fill="none" stroke="#1b2140" stroke-width="1.450"/></svg>
<div class="t r" style="left:190px;top:716.5px;letter-spacing:.05px">Christine West</div>
<svg style="left:319px;top:717.9px" width="11" height="8" viewBox="0 0 11 8"><rect x=".45" y="1.3" width="7.7" height="5.4" rx="1" fill="none" stroke="#d3d5dc" stroke-width=".9"/><path d="M9.4 3.200v1.6" stroke="#d3d5dc" stroke-width=".9" stroke-linecap="round"/><rect x="1.7" y="2.6" width="5.2" height="2.8" fill="#cfd1d8"/></svg>
<div class="t r" style="left:335.9px;top:717.4px;letter-spacing:-.25px">78%</div>
<svg style="left:402.8px;top:717.7px" width="9" height="9" viewBox="0 0 9 9"><circle cx="4.5" cy="4.5" r="3.9" fill="#c6c7cd"/><path d="M4.5 2.800V6M3.2 4.800L4.5 6.100L5.8 4.8" stroke="#fff" stroke-width="1.1" fill="none" stroke-linecap="round" stroke-linejoin="round"/></svg>
<div class="t r" style="left:417.5px;top:717.4px;letter-spacing:.4px">Low</div>
<svg style="left:486.5px;top:717.3px" width="11.5" height="9" viewBox="0 0 13 10"><path d="M.800 9.300c0-2.1 1.4-3.2 3.5-3.200s3.5 1.1 3.5 3.200M4.3 4.600a1.9 1.9 0 1 0 0-3.8 1.9 1.9 0 0 0 0 3.800zM9.3 5.300l1.1 1.1 1.9-2.1" fill="none" stroke="#c9cbd3" stroke-width="1" stroke-linecap="round" stroke-linejoin="round"/></svg>
<div class="t r" style="left:504px;top:717.7px;letter-spacing:.35px">Dr. Carter-</div>
<svg style="left:570.5px;top:717.5px" width="7" height="9" viewBox="0 0 9 11"><path d="M4.5 10.300C2.3 8.2.9 6.3.9 4.300a3.6 3.6 0 0 1 7.2 0c0 2-1.4 3.9-3.6 6z" fill="none" stroke="#c9cbd3" stroke-width="1.1"/><circle cx="4.5" cy="4.3" r="1.5" fill="none" stroke="#c9cbd3" stroke-width="1.1"/></svg>
<div class="t r" style="left:585px;top:717.7px;letter-spacing:0.42px">Eugenio Litta</div>
<svg style="left:832.3px;top:716.2px" width="17" height="12.6" viewBox="0 0 17 12.6"><path d="M.8 6.300C2.9 2.8 5.4 .8 8.5 .8s5.6 2 7.7 5.500c-2.1 3.5-4.6 5.5-7.7 5.500S2.9 9.8 .8 6.300z" fill="none" stroke="#1b2140" stroke-width="1.350" stroke-linejoin="round"/><circle cx="8.5" cy="6.3" r="2.450" fill="none" stroke="#1b2140" stroke-width="1.450"/></svg>
<div class="t r" style="left:190px;top:750px;letter-spacing:.05px">Christine Williams</div>
<svg style="left:319px;top:751.4px" width="11" height="8" viewBox="0 0 11 8"><rect x=".45" y="1.3" width="7.7" height="5.4" rx="1" fill="none" stroke="#d3d5dc" stroke-width=".9"/><path d="M9.4 3.200v1.6" stroke="#d3d5dc" stroke-width=".9" stroke-linecap="round"/><rect x="1.7" y="2.6" width="5.2" height="2.8" fill="#cfd1d8"/></svg>
<div class="t r" style="left:332.3px;top:750.9px;letter-spacing:-.25px">78%</div>
<svg style="left:402.8px;top:751.2px" width="9" height="9" viewBox="0 0 9 9"><circle cx="4.5" cy="4.5" r="3.9" fill="#c6c7cd"/><path d="M4.5 2.800V6M3.2 4.800L4.5 6.100L5.8 4.8" stroke="#fff" stroke-width="1.1" fill="none" stroke-linecap="round" stroke-linejoin="round"/></svg>
<div class="t r" style="left:417.5px;top:750.9px;letter-spacing:.4px">Low</div>
<svg style="left:486.5px;top:750.8px" width="11.5" height="9" viewBox="0 0 13 10"><path d="M.800 9.300c0-2.1 1.4-3.2 3.5-3.200s3.5 1.1 3.5 3.200M4.3 4.600a1.9 1.9 0 1 0 0-3.8 1.9 1.9 0 0 0 0 3.800zM9.3 5.300l1.1 1.1 1.9-2.1" fill="none" stroke="#c9cbd3" stroke-width="1" stroke-linecap="round" stroke-linejoin="round"/></svg>
<div class="t r" style="left:504px;top:751.2px;letter-spacing:.35px">Dr. Zhang</div>
<svg style="left:570.5px;top:751px" width="7" height="9" viewBox="0 0 9 11"><path d="M4.5 10.300C2.3 8.2.9 6.3.9 4.300a3.6 3.6 0 0 1 7.2 0c0 2-1.4 3.9-3.6 6z" fill="none" stroke="#c9cbd3" stroke-width="1.1"/><circle cx="4.5" cy="4.3" r="1.5" fill="none" stroke="#c9cbd3" stroke-width="1.1"/></svg>
<div class="t r" style="left:585px;top:751.2px;letter-spacing:0.15px">St. Mary&#39;s</div>
<svg style="left:832.3px;top:749.7px" width="17" height="12.6" viewBox="0 0 17 12.6"><path d="M.8 6.300C2.9 2.8 5.4 .8 8.5 .8s5.6 2 7.7 5.500c-2.1 3.5-4.6 5.5-7.7 5.500S2.9 9.8 .8 6.300z" fill="none" stroke="#1b2140" stroke-width="1.350" stroke-linejoin="round"/><circle cx="8.5" cy="6.3" r="2.450" fill="none" stroke="#1b2140" stroke-width="1.450"/></svg>
</div></body></html>
